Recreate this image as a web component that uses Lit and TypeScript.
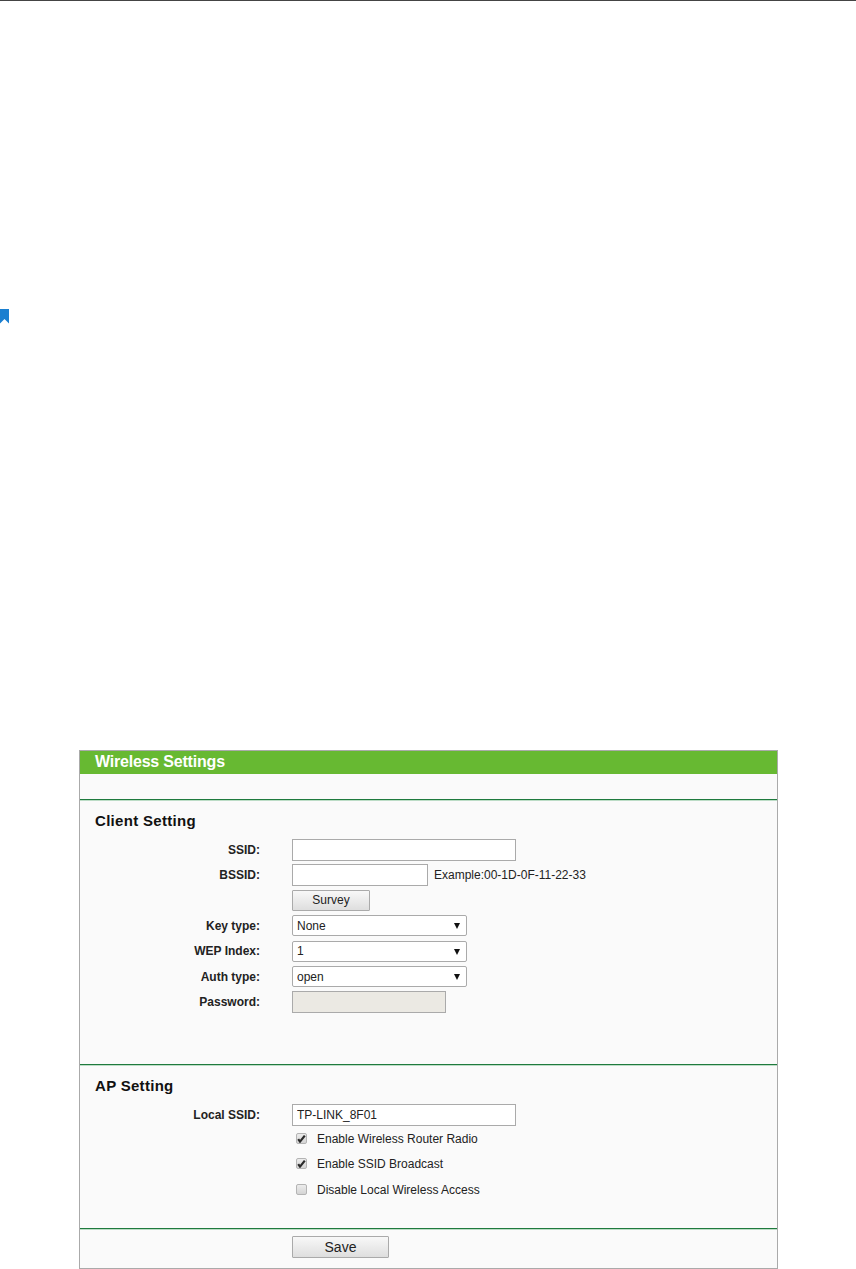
import { LitElement, css, html } from 'lit'
import { customElement } from 'lit/decorators.js'

type Check = { label: string; checked: boolean }

const selects = [
  { label: 'Key type:', value: 'None' },
  { label: 'WEP Index:', value: '1' },
  { label: 'Auth type:', value: 'open' },
]

const checks: Check[] = [
  { label: 'Enable Wireless Router Radio', checked: true },
  { label: 'Enable SSID Broadcast', checked: true },
  { label: 'Disable Local Wireless Access', checked: false },
]

@customElement('app-root')
export class AppRoot extends LitElement {
  private _select(label: string, value: string) {
    return html`
      <label class="lbl">${label}</label>
      <div class="select-wrap">
        <select class="select"><option>${value}</option></select>
        <svg class="arrow" width="6" height="6" viewBox="0 0 6 6"><path d="M0 0h6L3 6z" fill="#111"/></svg>
      </div>
    `
  }

  private _check(c: Check) {
    return html`
      <div></div>
      <div class="check-row">
        <span class="box">
          ${c.checked ? html`<svg width="9" height="9" viewBox="0 0 9 9"><path d="M1.2 5.2l1.8 2.4L7.8 1.6" fill="none" stroke="#2a2a2a" stroke-width="2.2"/></svg>` : ''}
        </span>
        <span>${c.label}</span>
      </div>
    `
  }

  render() {
    return html`
      <div class="top-rule"></div>
      <svg class="bookmark" width="9" height="15" viewBox="0 0 9 15"><path d="M0 0h9v14.5L4.5 10 0 14.5z" fill="#1a7fd0"/></svg>
      <section class="panel">
        <div class="head">Wireless Settings</div>
        <div class="spacer"></div>

        <div class="section client">
          <h2>Client Setting</h2>
          <div class="form">
            <label class="lbl">SSID:</label>
            <input class="input w-long" type="text" />
            <label class="lbl">BSSID:</label>
            <div class="inline">
              <input class="input w-mid" type="text" />
              <span>Example:00-1D-0F-11-22-33</span>
            </div>
            <div></div>
            <button class="btn survey">Survey</button>
            ${selects.map(s => this._select(s.label, s.value))}
            <label class="lbl">Password:</label>
            <input class="input w-pass" type="text" disabled />
          </div>
        </div>

        <div class="section ap">
          <h2>AP Setting</h2>
          <div class="form">
            <label class="lbl">Local SSID:</label>
            <input class="input w-long" type="text" value="TP-LINK_8F01" />
            ${checks.map(c => this._check(c))}
          </div>
        </div>

        <div class="section foot">
          <button class="btn save">Save</button>
        </div>
      </section>
    `
  }

  static styles = css`
:host {
  display: block;
  height: 1269px;
  background: #fff;
  font-family: "Liberation Sans", Arial, sans-serif;
  font-size: 12px;
  color: #222;
  overflow: hidden;
}
.top-rule {
  height: 1px;
  background: #444;
}
.bookmark {
  display: block;
  margin-top: 308px;
}
.panel {
  box-sizing: border-box;
  width: 699px;
  height: 519px;
  margin: 426px 0 0 79px;
  border: 1px solid #aaa;
  background: #fafafa;
}
.head {
  height: 23px;
  line-height: 21px;
  padding-left: 15px;
  background: #67b932;
  color: #fff;
  font-size: 16px;
  font-weight: bold;
  letter-spacing: -0.2px;
}
.spacer {
  height: 25px;
}
.section {
  border-top: 1px solid #1f7a3d;
  box-shadow: inset 0 1px 0 #bcdcc6;
}
.client {
  height: 264px;
}
.ap {
  height: 163px;
}
h2 {
  margin: 0;
  padding: 12px 0 0 15px;
  height: 25px;
  line-height: 17px;
  font-size: 15px;
  font-weight: bold;
  letter-spacing: 0.3px;
  color: #111;
}
.form {
  display: grid;
  grid-template-columns: 180px 1fr;
  column-gap: 32px;
  align-items: center;
  justify-items: start;
}
.client .form {
  grid-auto-rows: 25.4px;
}
.ap .form {
  grid-template-rows: 23px 25px 25px 27px;
}
.ap h2 {
  height: 26px;
}
.lbl {
  justify-self: end;
  font-weight: bold;
  color: #222;
}
.input {
  box-sizing: border-box;
  height: 22px;
  padding: 0 4px;
  border: 1px solid #aaa;
  background: #fff;
  font: 12px "Liberation Sans", Arial, sans-serif;
  color: #222;
  border-radius: 0;
  outline: none;
}
.input:disabled {
  background: #ebe9e3;
}
.w-long { width: 224px; }
.w-mid { width: 136px; }
.w-pass { width: 154px; }
.inline {
  display: flex;
  align-items: center;
  gap: 6px;
}
.btn {
  box-sizing: border-box;
  border: 1px solid #aaa;
  border-radius: 1px;
  background: linear-gradient(#f8f8f8, #dedede);
  font: 12px "Liberation Sans", Arial, sans-serif;
  color: #222;
  padding: 0;
}
.survey {
  width: 78px;
  height: 21px;
}
.save {
  width: 97px;
  height: 22px;
  font-size: 14px;
}
.select-wrap {
  position: relative;
  width: 175px;
  height: 21px;
}
.select {
  appearance: none;
  display: block;
  box-sizing: border-box;
  width: 100%;
  height: 100%;
  padding: 0 4px;
  border: 1px solid #aaa;
  border-radius: 2px;
  background: #fff;
  font: 12px "Liberation Sans", Arial, sans-serif;
  color: #222;
}
.arrow {
  position: absolute;
  right: 7px;
  top: 8px;
}
.check-row {
  display: flex;
  align-items: center;
  gap: 10px;
  padding-left: 4px;
}
.box {
  box-sizing: border-box;
  display: flex;
  align-items: center;
  justify-content: center;
  width: 11px;
  height: 11px;
  border: 1px solid #b4b4b4;
  border-radius: 2px;
  background: linear-gradient(#ececec, #d4d4d4);
}
.foot {
  padding: 7px 0 0 212px;
}
`
}

declare global {
  interface HTMLElementTagNameMap {
    'app-root': AppRoot
  }
}
